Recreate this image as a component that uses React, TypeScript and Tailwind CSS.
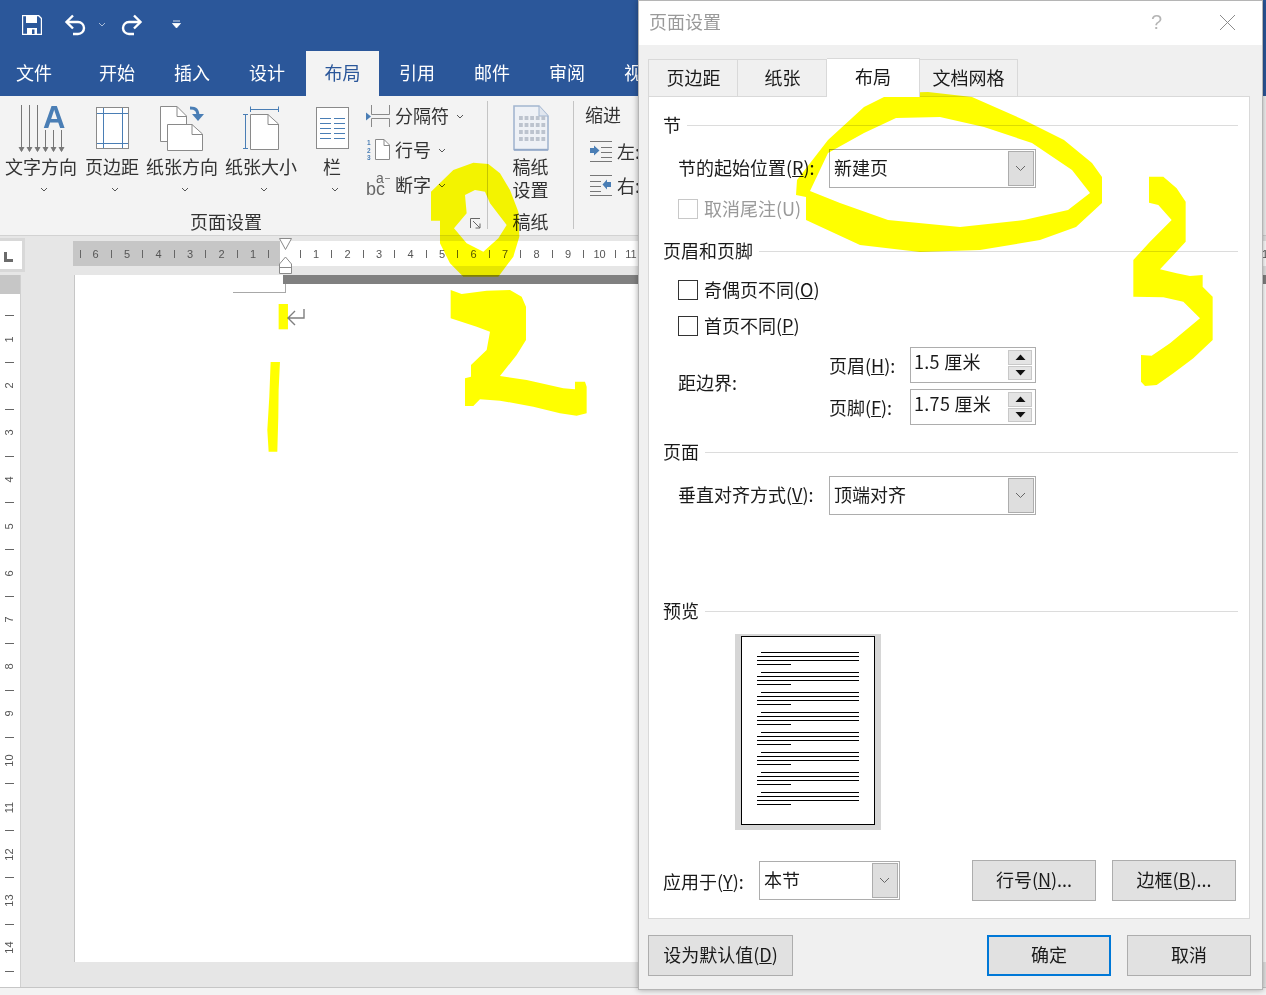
import React from "react";

const BLUE = "#4a7eb5";
const GR = "#8a8a8a";

function Chev({ c = "#555", cls = "" }: { c?: string; cls?: string }) {
  return (
    <svg width="8" height="5" viewBox="0 0 8 5" className={cls}>
      <path d="M1 1l3 3 3-3" fill="none" stroke={c} strokeWidth="1" />
    </svg>
  );
}

function BoxChev() {
  return (
    <svg width="11" height="7" viewBox="0 0 11 7" className="-ml-px">
      <path d="M1 1l4.5 4.5L10 1" fill="none" stroke="#666" strokeWidth="1" />
    </svg>
  );
}

function TextDirIcon() {
  const arrows = [
    [21, 105],
    [29, 105],
    [37, 105],
    [45, 130],
    [53, 130],
    [61, 130],
  ];
  return (
    <svg width="72" height="50" viewBox="5 105 72 50" className="overflow-visible">
      {arrows.map(([x, y]) => (
        <g key={x} stroke="#777" strokeWidth="1" fill="none">
          <path d={`M${x + 0.5} ${y}V151`} />
          <path d={`M${x - 2} 147l2.5 4.5 2.5-4.5`} fill="#777" />
        </g>
      ))}
      <text x="43" y="128" fontFamily="'Liberation Sans',sans-serif" fontWeight="700" fontSize="31" fill={BLUE}>
        A
      </text>
    </svg>
  );
}

function MarginIcon() {
  return (
    <svg width="54" height="50" viewBox="85 105 54 50">
      <rect x="96.5" y="107.5" width="32" height="41" fill="#fff" stroke={GR} />
      <path d="M103.5 108V148M122.5 108V148M97 113.5H128M97 143.5H128" stroke={BLUE} strokeWidth="1" />
    </svg>
  );
}

function OrientIcon() {
  return (
    <svg width="72" height="50" viewBox="146 105 72 50">
      <path d="M160.5 106.5H177L186.5 116V141.5H160.5Z" fill="#fff" stroke={GR} />
      <path d="M177 106.5V116.5H186.5" fill="none" stroke={GR} />
      <path d="M167.5 124.5H192L202.5 134V150.5H167.5Z" fill="#fff" stroke={GR} />
      <path d="M192 124.5V134.5H202.5" fill="none" stroke={GR} />
      <path d="M190 108c6 0 8 2 8 9" fill="none" stroke={BLUE} strokeWidth="3" />
      <path d="M192 114l6 7 6-7z" fill={BLUE} />
    </svg>
  );
}

function SizeIcon() {
  return (
    <svg width="72" height="50" viewBox="225 105 72 50">
      <path d="M250.5 114.5H268L278.5 124V149.5H250.5Z" fill="#fff" stroke={GR} />
      <path d="M268 114.5V124.5H278.5" fill="none" stroke={GR} />
      <path d="M250.5 106.5V112M250.5 109.5H278.5M278.5 106.5V112M243 114.5H248M245.5 114.5V148.5M243 148.5H248" stroke={BLUE} fill="none" />
    </svg>
  );
}

function ColsIcon() {
  const ys = [118, 123, 128, 133, 138];
  return (
    <svg width="36" height="50" viewBox="314 105 36 50">
      <rect x="316.5" y="107.5" width="32" height="41" fill="#fff" stroke={GR} />
      {ys.map((y) => (
        <path key={y} d={`M320 ${y + 0.5}H331M334 ${y + 0.5}H345`} stroke={BLUE} />
      ))}
    </svg>
  );
}

function BreakIcon() {
  return (
    <svg width="24" height="24" viewBox="367 104 24 24">
      <path d="M372.5 105V114.5H390.5V105M372.5 127V118.5H390.5V127" fill="none" stroke={GR} />
      <path d="M367 112.5v8l5-4z" fill={BLUE} />
    </svg>
  );
}

function LineNoIcon() {
  return (
    <svg width="24" height="24" viewBox="367 138 24 24" className="overflow-visible">
      <path d="M376.5 139.5H385L390.5 145V159.5H376.5Z" fill="#fff" stroke={GR} />
      <path d="M385 139.5V145.5H390.5" fill="none" stroke={GR} />
      <text x="368" y="145" fontSize="6.5" fill={BLUE} fontFamily="'Liberation Sans',sans-serif" fontWeight="700">1</text>
      <text x="368" y="153" fontSize="6.5" fill={BLUE} fontFamily="'Liberation Sans',sans-serif" fontWeight="700">2</text>
      <text x="368" y="160" fontSize="6.5" fill={BLUE} fontFamily="'Liberation Sans',sans-serif" fontWeight="700">3</text>
    </svg>
  );
}

function HyphenIcon() {
  return (
    <svg width="24" height="24" viewBox="366 173 24 24" className="overflow-visible">
      <text x="366" y="195" fontSize="18" fill="#666" fontFamily="'Liberation Sans',sans-serif">bc</text>
      <text x="376" y="183" fontSize="14" fill="#666" fontFamily="'Liberation Sans',sans-serif">a</text>
      <path d="M385 178.5H390" stroke={GR} />
    </svg>
  );
}

function GridPaperIcon() {
  const cells: number[][] = [];
  for (let r = 0; r < 4; r++) for (let c = 0; c < 5; c++) cells.push([519 + c * 5.6, 116 + r * 7]);
  return (
    <svg width="38" height="47" viewBox="512 105 38 47">
      <path d="M514 106H539L548 116V149.5H514Z" fill="#eef1f6" stroke="#a3b6d0" strokeWidth="1.6" />
      <path d="M514 150H548" stroke="#8ea5c6" strokeWidth="1.6" />
      <path d="M539 106V116H548" fill="#e0e6ef" stroke="#a3b6d0" />
      {cells.map(([x, y]) => (
        <rect key={`${x}-${y}`} x={x} y={y} width="3.8" height="4" fill="#bcc3ce" />
      ))}
    </svg>
  );
}

function IndentIcon({ right }: { right?: boolean }) {
  return (
    <svg width="24" height="24" viewBox="0 0 24 24">
      <path d={right ? "M1 2.5H23M1 8.5H12M1 13.5H12M1 18.5H12M1 22.5H23" : "M1 2.5H23M12 8.5H23M12 13.5H23M12 18.5H23M1 22.5H23"} stroke="#777" />
      <path d={right ? "M22 9H18V6.5L13.5 11.5L18 16.5V14H22Z" : "M1 9H5V6.5L10.5 11.5L5 16.5V14H1Z"} fill={BLUE} />
    </svg>
  );
}

function RibbonBtn({ w, label, children }: { w: string; label: string; children: React.ReactNode }) {
  return (
    <div className={`flex flex-col items-center shrink-0 ${w}`}>
      <div className="h-[50px] flex items-start">{children}</div>
      <div className="h-[24px] leading-[24px] whitespace-nowrap -translate-y-px">{label}</div>
      <div className="h-[10px] mt-[5px] ml-[5px] flex items-center">
        <Chev />
      </div>
    </div>
  );
}

function HRuler() {
  const cells = Array.from({ length: 76 }, (_, i) => i);
  return (
    <div className="flex h-[25px] w-full overflow-hidden font-['Liberation_Sans',sans-serif] text-[11px] text-[#555]">
      {cells.map((i) => {
        const gray = i < 13;
        const bg = gray ? "bg-[#c6c6c6]" : "bg-white";
        const n = i < 13 ? (13 - i) / 2 : (i - 13) / 2;
        const first = i === 0 ? "w-[14.65px]" : "w-[15.75px]";
        let inner: React.ReactNode = null;
        if (i === 13) inner = <span className="absolute left-0 top-0 h-[25px] w-[3px] bg-[#c6c6c6]" />;
        else if (i === 75) inner = <span className="ml-[8px] pt-px">1</span>;
        else if (i > 36) inner = null;
        else if (i % 2 === 1) inner = <span className="pt-px">{n}</span>;
        else inner = <span className="block w-px h-[8px] mt-px bg-[#666]" />;
        return (
          <div key={i} className={`${first} shrink-0 flex items-center justify-center relative ${bg}`}>
            {inner}
          </div>
        );
      })}
    </div>
  );
}

function VRuler() {
  const cells = Array.from({ length: 29 }, (_, i) => i);
  return (
    <div className="w-[21px] shrink-0 bg-white border-r border-[#d0d0d0] font-['Liberation_Sans',sans-serif] text-[11px] text-[#555] overflow-hidden">
      <div className="h-[19px] bg-[#c6c6c6]" />
      <div className="h-[10px]" />
      {cells.map((i) => (
        <div key={i} className="h-[23.42px] flex items-center justify-center pr-px">
          {i % 2 === 1 ? (
            <span className="-rotate-90 leading-none">{(i + 1) / 2}</span>
          ) : (
            <span className="block w-[9px] h-px bg-[#666]" />
          )}
        </div>
      ))}
    </div>
  );
}

function GroupHead({ title }: { title: string }) {
  return (
    <div className="h-[24px] flex items-center pl-[14px] pr-[11px] gap-[6px]">
      <span className="leading-[24px] whitespace-nowrap -translate-y-px">{title}</span>
      <span className="flex-1 h-px bg-[#dcdcdc]" />
    </div>
  );
}

function Select({ w, value }: { w: string; value: string }) {
  return (
    <div className={`${w} h-[39px] border border-[#adadad] bg-white flex items-center pl-[4px] pr-px`}>
      <span className="flex-1 leading-[24px] -translate-y-[2px]">{value}</span>
      <span className="w-[26px] h-[35px] bg-[#dedede] border border-[#adadad] flex items-center justify-center">
        <BoxChev />
      </span>
    </div>
  );
}

function Spin({ value }: { value: string }) {
  return (
    <div className="w-[126px] h-[36px] border border-[#adadad] bg-white flex items-center pl-[3px] pr-[3px]">
      <span className="flex-1 leading-[24px] -translate-y-[4px] tracking-[0.3px] whitespace-nowrap">{value}</span>
      <span className="w-[24px] h-[30px] flex flex-col gap-px">
        <span className="flex-1 bg-[#e4e4e4] border border-[#c8c8c8] flex items-center justify-center">
          <svg width="11" height="6" viewBox="0 0 11 6"><path d="M0.5 6L5.5 0.5 10.5 6z" fill="#111" /></svg>
        </span>
        <span className="flex-1 bg-[#e4e4e4] border border-[#c8c8c8] flex items-center justify-center">
          <svg width="11" height="6" viewBox="0 0 11 6"><path d="M0.5 0L5.5 5.5 10.5 0z" fill="#111" /></svg>
        </span>
      </span>
    </div>
  );
}

function Check({ label, k, disabled }: { label: string; k: string; disabled?: boolean }) {
  return (
    <div className={`h-[20px] flex items-center ml-[29px] ${disabled ? "text-[#9a9a9a]" : ""}`}>
      <span className={`w-[20px] h-[20px] bg-white border shrink-0 ${disabled ? "border-[#c8c8c8]" : "border-[#333]"}`} />
      <span className="ml-[6px] leading-[24px] whitespace-nowrap -translate-y-px">
        {label}(<span className={disabled ? "" : "underline"}>{k}</span>)
      </span>
    </div>
  );
}

function DlgBtn({ w, children, primary }: { w: string; children: React.ReactNode; primary?: boolean }) {
  return (
    <div className={`${w} h-[41px] bg-[#e1e1e1] flex items-center justify-center shrink-0 whitespace-nowrap ${primary ? "border-2 border-[#0078d7]" : "border border-[#adadad]"}`}>
      <span className="-translate-y-px">{children}</span>
    </div>
  );
}

function Preview() {
  const blocks = Array.from({ length: 8 }, (_, i) => i);
  return (
    <div className="w-[146px] h-[196px] ml-[86px] bg-[#d6d6d6] pl-[6px] pt-[2px]">
      <div className="w-[134px] h-[189px] bg-white border-[1.5px] border-black pl-[14.5px] pt-[14.5px] flex flex-col">
        {blocks.map((b) => (
          <div key={b} className="h-[20px] shrink-0">
            <div className="h-px bg-black ml-[4px] w-[98px] mb-[3px]" />
            <div className="h-px bg-black w-[102px] mb-[3px]" />
            <div className="h-px bg-black w-[102px] mb-[3px]" />
            <div className="h-px bg-black w-[34px]" />
          </div>
        ))}
      </div>
    </div>
  );
}

function Dialog() {
  return (
    <div className="absolute left-[638px] top-0 w-[625px] h-[990px] bg-[#f0f0f0] border border-[#b5b5b5] shadow-[0_0_6px_rgba(0,0,0,0.35)] flex flex-col text-[18px] text-[#1a1a1a]">
      <div className="h-[44px] shrink-0 bg-white flex items-center pl-[10px] text-[#9a9a9a]">
        <span className="-translate-y-[2px]">页面设置</span>
        <span className="ml-auto mr-[57px] text-[#b5b5b5] text-[20px] font-['Liberation_Sans',sans-serif] -translate-y-px">?</span>
        <svg width="17" height="17" viewBox="0 0 17 17" className="mr-[26px] -translate-y-px">
          <path d="M1 1l15 15M16 1L1 16" stroke="#8c8c8c" strokeWidth="1" />
        </svg>
      </div>
      <div className="flex pl-[9px] pt-[12px] h-[51px] shrink-0 items-end">
        <div className="w-[90px] h-[37px] bg-[#f0f0f0] border border-[#d9d9d9] border-b-0 flex items-center justify-center pl-px"><span className="-translate-y-px">页边距</span></div>
        <div className="w-[89px] h-[37px] bg-[#f0f0f0] border-t border-r border-[#d9d9d9] flex items-center justify-center pl-px"><span className="-translate-y-px">纸张</span></div>
        <div className="w-[93px] h-[39px] bg-white border-t border-r border-[#d9d9d9] flex items-center justify-center relative z-10 -mb-px"><span className="-translate-y-[2px]">布局</span></div>
        <div className="w-[98px] h-[37px] bg-[#f0f0f0] border-t border-r border-[#d9d9d9] flex items-center justify-center"><span className="-translate-y-px">文档网格</span></div>
      </div>
      <div className="ml-[9px] w-[602px] h-[823px] bg-white border border-[#d9d9d9] flex flex-col pt-[16px] shrink-0">
        <GroupHead title="节" />
        <div className="flex items-center mt-[12px] ml-[29px]">
          <span className="w-[151px] whitespace-nowrap leading-[24px] -translate-y-[2px]">
            节的起始位置(<span className="underline">R</span>):
          </span>
          <Select w="w-[207px]" value="新建页" />
        </div>
        <div className="mt-[11px]">
          <Check label="取消尾注" k="U" disabled />
        </div>
        <div className="mt-[20px]">
          <GroupHead title="页眉和页脚" />
        </div>
        <div className="mt-[17px]">
          <Check label="奇偶页不同" k="O" />
        </div>
        <div className="mt-[16px]">
          <Check label="首页不同" k="P" />
        </div>
        <div className="mt-[11px] flex items-center ml-[29px]">
          <span className="w-[151px] leading-[24px] -translate-y-[4px]">距边界:</span>
          <div className="flex flex-col gap-[6px]">
            <div className="flex items-center">
              <span className="w-[81px] whitespace-nowrap leading-[24px]">
                页眉(<span className="underline">H</span>):
              </span>
              <Spin value="1.5 厘米" />
            </div>
            <div className="flex items-center">
              <span className="w-[81px] whitespace-nowrap leading-[24px]">
                页脚(<span className="underline">F</span>):
              </span>
              <Spin value="1.75 厘米" />
            </div>
          </div>
        </div>
        <div className="mt-[15px]">
          <GroupHead title="页面" />
        </div>
        <div className="flex items-center mt-[12px] ml-[29px]">
          <span className="w-[151px] whitespace-nowrap leading-[24px] -translate-y-[2px]">
            垂直对齐方式(<span className="underline">V</span>):
          </span>
          <Select w="w-[207px]" value="顶端对齐" />
        </div>
        <div className="mt-[84px]">
          <GroupHead title="预览" />
        </div>
        <div className="mt-[11px]">
          <Preview />
        </div>
        <div className="mt-[30px] flex items-center ml-[14px]">
          <span className="w-[96px] whitespace-nowrap leading-[24px]">
            应用于(<span className="underline">Y</span>):
          </span>
          <Select w="w-[141px]" value="本节" />
          <div className="ml-[72px]">
            <DlgBtn w="w-[124px]">
              行号(<span className="underline">N</span>)...
            </DlgBtn>
          </div>
          <div className="ml-[16px]">
            <DlgBtn w="w-[124px]">
              边框(<span className="underline">B</span>)...
            </DlgBtn>
          </div>
        </div>
      </div>
      <div className="flex pl-[9px] mt-[16px] shrink-0">
        <DlgBtn w="w-[145px]">
          设为默认值(<span className="underline">D</span>)
        </DlgBtn>
        <div className="ml-[194px]">
          <DlgBtn w="w-[124px]" primary>确定</DlgBtn>
        </div>
        <div className="ml-[16px]">
          <DlgBtn w="w-[124px]">取消</DlgBtn>
        </div>
      </div>
    </div>
  );
}

function Scribbles() {
  return (
    <svg className="absolute left-0 top-0 pointer-events-none mix-blend-multiply" width="1266" height="995" viewBox="0 0 1266 995">
      <g fill="#ffff00">
        <path
          fillRule="evenodd"
          d="M796 195L797 180 828 140 864 107 892 93 928 92 972 97 1024 120 1064 140 1092 163 1102 177 1102 203 1076 227 1040 240 980 250 920 252 860 245 806 220 806 197Z M810 191L828 153 864 133 896 118 940 117 984 127 1032 143 1072 170 1090 193 1068 210 1024 220 960 227 888 220 840 203Z"
        />
        <g transform="translate(420 150) scale(0.3333)">
          <path
            fillRule="evenodd"
            d="M33 125L100 60 160 38 205 42 240 70 270 120 295 185 298 260 280 320 235 380 130 380 90 340 60 280 60 212 33 212Z M135 135L165 120 195 125 210 160 260 225 235 265 190 305 140 280 102 235 140 190Z"
          />
          <path d="M92 420L125 432 200 422 270 420 305 440 318 470 318 570 290 615 240 678 320 690 430 715 465 718 465 695 495 695 500 710 500 790 470 797 420 790 340 770 240 752 180 748 160 768 135 768 135 685 153 680 153 645 200 600 210 545 170 530 92 505Z" />
        </g>
        <g transform="translate(1120 160) scale(0.3333)">
          <path d="M87 50L130 50 170 85 197 125 197 245 165 280 120 328 170 340 210 348 248 345 248 380 278 410 278 540 220 595 160 640 110 675 75 678 63 665 63 585 95 587 150 550 240 475 190 425 130 412 40 410 40 300 90 245 155 180 115 135 87 128Z" />
        </g>
        <g transform="translate(0 230) scale(0.3333)">
          <path d="M836 222H864V298H836Z" />
          <path d="M812 396L840 396 836 480 835 560 832 665 806 665 802 600 808 500Z" />
        </g>
      </g>
    </svg>
  );
}

export default function App() {
  return (
    <div className="relative w-[1266px] h-[995px] overflow-hidden bg-[#e6e6e6] flex flex-col font-['Noto_Sans_CJK_SC',sans-serif] text-[18px] text-[#333]">
      <div className="h-[51px] shrink-0 bg-[#2b579a] flex items-center pl-[22px]">
        <svg width="20" height="20" viewBox="0 0 20 20" className="-mt-[2px]">
          <path d="M0.5 0.5H16.5L19.5 3.5V19.5H0.5Z" fill="none" stroke="#fff" strokeWidth="1.4" />
          <path d="M4 1H15V8H4Z" fill="#fff" />
          <path d="M5 13H15V19H5Z" fill="#fff" />
          <path d="M10 14.5H12.5V19H10Z" fill="#2b579a" />
        </svg>
        <svg width="22" height="22" viewBox="0 0 22 22" className="ml-[22px] -mt-[2px]">
          <path d="M3 8H14A6 6 0 0 1 14 20H9" fill="none" stroke="#fff" strokeWidth="2.4" />
          <path d="M9 1.5L2.5 8 9 14.5" fill="none" stroke="#fff" strokeWidth="2.4" />
        </svg>
        <span className="ml-[12px] -mt-[2px]">
          <Chev c="#a9bcd8" />
        </span>
        <svg width="22" height="22" viewBox="0 0 22 22" className="ml-[15px] -mt-[2px]">
          <path d="M19 8H8A6 6 0 0 0 8 20H13" fill="none" stroke="#fff" strokeWidth="2.4" />
          <path d="M13 1.5L19.5 8 13 14.5" fill="none" stroke="#fff" strokeWidth="2.4" />
        </svg>
        <svg width="9" height="9" viewBox="0 0 9 9" className="ml-[29px] -mt-[2px]">
          <path d="M1 1H8M0.5 3.5H8.5L4.5 8Z" fill="#fff" stroke="#fff" strokeWidth="0.8" />
        </svg>
      </div>
      <div className="h-[45px] shrink-0 bg-[#2b579a] flex text-white">
        <div className="pl-[16px] pr-[18px] leading-[43px] mr-[11px]">文件</div>
        <div className="w-[72px] text-center leading-[43px] mr-[3px]">开始</div>
        <div className="w-[72px] text-center leading-[43px] mr-[3px]">插入</div>
        <div className="w-[72px] text-center leading-[43px] mr-[3px]">设计</div>
        <div className="w-[73px] text-center leading-[43px] bg-[#f3f3f3] text-[#2b579a] mr-[2px]">布局</div>
        <div className="w-[72px] text-center leading-[43px] mr-[3px]">引用</div>
        <div className="w-[72px] text-center leading-[43px] mr-[3px]">邮件</div>
        <div className="w-[72px] text-center leading-[43px] mr-[3px]">审阅</div>
        <div className="w-[72px] text-center leading-[43px] mr-[3px]">视图</div>
      </div>
      <div className="h-[140px] shrink-0 bg-[#f3f3f3] border-b border-[#d2d2d2] flex">
        <div className="w-[487px] shrink-0 flex flex-col">
          <div className="h-[114px] shrink-0 pt-[9px] pl-[5px] flex">
            <RibbonBtn w="w-[72px]" label="文字方向"><TextDirIcon /></RibbonBtn>
            <div className="ml-[8px]"><RibbonBtn w="w-[54px]" label="页边距"><MarginIcon /></RibbonBtn></div>
            <div className="ml-[7px]"><RibbonBtn w="w-[72px]" label="纸张方向"><OrientIcon /></RibbonBtn></div>
            <div className="ml-[7px]"><RibbonBtn w="w-[72px]" label="纸张大小"><SizeIcon /></RibbonBtn></div>
            <div className="ml-[17px]"><RibbonBtn w="w-[36px]" label="栏"><ColsIcon /></RibbonBtn></div>
            <div className="ml-[16px] flex flex-col -mt-px">
              <div className="h-[24px] flex items-center">
                <BreakIcon />
                <span className="ml-[5px] whitespace-nowrap -translate-y-px">分隔符</span>
                <Chev cls="ml-[7px]" />
              </div>
              <div className="h-[24px] flex items-center mt-[10px]">
                <LineNoIcon />
                <span className="ml-[5px] whitespace-nowrap -translate-y-px">行号</span>
                <Chev cls="ml-[7px]" />
              </div>
              <div className="h-[24px] flex items-center mt-[11px]">
                <HyphenIcon />
                <span className="ml-[5px] whitespace-nowrap -translate-y-px">断字</span>
                <Chev cls="ml-[7px]" />
              </div>
            </div>
          </div>
          <div className="h-[24px] flex items-center pl-[190px] pr-[6px]">
            <span className="whitespace-nowrap -translate-y-px">页面设置</span>
            <svg width="11" height="11" viewBox="0 0 11 11" className="ml-auto mt-[3px]">
              <path d="M0.5 10V0.5H10M3 3l7 7M10 5.5V10H5.5" fill="none" stroke="#666" />
            </svg>
          </div>
        </div>
        <div className="w-[87px] shrink-0 flex flex-col items-center relative">
          <span className="absolute left-0 top-[5px] w-px h-[128px] bg-[#c4c4c4]" />
          <span className="absolute right-0 top-[5px] w-px h-[128px] bg-[#c4c4c4]" />
          <div className="pt-[9px] h-[50px] flex items-start"><GridPaperIcon /></div>
          <div className="pt-[9px] leading-[23px] text-center w-[40px] h-[55px]">稿纸设置</div>
          <div className="h-[24px] leading-[24px] mt-[8px]">稿纸</div>
        </div>
        <div className="pl-[11px] pt-[6px] flex flex-col whitespace-nowrap">
          <div className="h-[24px] leading-[24px]">缩进</div>
          <div className="h-[24px] mt-[13px] flex items-center ml-[4px]">
            <IndentIcon />
            <span className="ml-[4px]">左:</span>
          </div>
          <div className="h-[24px] mt-[10px] flex items-center ml-[4px]">
            <IndentIcon right />
            <span className="ml-[4px]">右:</span>
          </div>
        </div>
      </div>
      <div className="h-[39px] shrink-0 flex">
        <div className="w-[25px] h-[34px] mt-[2px] bg-white border-[3px] border-l-0 border-[#d8d8d8] shrink-0 flex items-end pl-[4px] pb-[7px]">
          <svg width="9" height="10" viewBox="0 0 9 10">
            <path d="M0 0H3V7H9V10H0Z" fill="#6b6b6b" />
          </svg>
        </div>
        <div className="ml-[48px] mt-[5px] flex-1 min-w-0">
          <HRuler />
        </div>
      </div>
      <div className="h-[712px] shrink-0 flex">
        <VRuler />
        <div className="ml-[53px] flex-1 h-[687px] bg-white border-l border-[#c6c6c6] flex flex-col">
          <div className="h-[9px] ml-[208px] bg-[#808080] shrink-0" />
          <div className="h-[9px] w-[53px] ml-[158px] border-r border-b border-[#a8a8a8] shrink-0" />
          <svg width="20" height="18" viewBox="0 0 20 18" className="ml-[211px] mt-[15px] shrink-0">
            <path d="M18 1V10H2M9 3L2 10 9 17" fill="none" stroke="#7f7f7f" strokeWidth="1.4" />
          </svg>
        </div>
      </div>
      <div className="flex-1 bg-[#f3f3f3] border-t border-[#c6c6c6]" />
      <svg className="absolute left-[279px] top-[238px]" width="14" height="37" viewBox="0 0 14 37">
        <path d="M0.5 0.5H12.5L6.5 11.5Z" fill="#fff" stroke="#8a8a8a" />
        <path d="M6.5 19L12.5 26V35.5H0.5V26Z" fill="#fff" stroke="#8a8a8a" />
        <path d="M0.5 29.5H12.5" stroke="#8a8a8a" />
      </svg>
      <Dialog />
      <Scribbles />
    </div>
  );
}
